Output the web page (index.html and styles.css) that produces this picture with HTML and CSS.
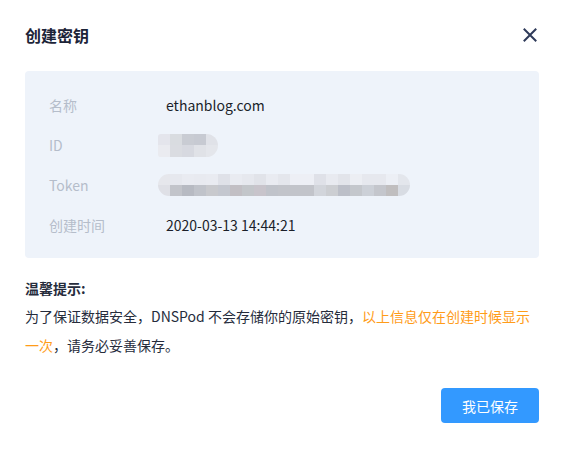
FILE: index.html
```html
<!DOCTYPE html>
<html lang="zh-CN">
<head>
<meta charset="utf-8">
<title>创建密钥</title>
<link rel="stylesheet" href="styles.css">
</head>
<body>
<div class="dialog">
  <div class="header">
    <div class="title">创建密钥</div>
    <svg class="close" width="18" height="18" viewBox="0 0 18 18" aria-label="关闭">
      <path d="M3.5 3.5 L14.5 14.5 M14.5 3.5 L3.5 14.5" stroke="#2e3a59" stroke-width="2" stroke-linecap="square" fill="none"/>
    </svg>
  </div>
  <div class="info">
    <div class="row"><div class="label">名称</div><div class="value">ethanblog.com</div></div>
    <div class="row"><div class="label">ID</div><div class="value"><div class="blur blur-id"><div class="brow id-top"></div><div class="brow id-bot"></div></div></div></div>
    <div class="row"><div class="label">Token</div><div class="value"><div class="blur blur-token"><div class="brow tk-top"></div><div class="brow tk-bot"></div></div></div></div>
    <div class="row"><div class="label">创建时间</div><div class="value">2020-03-13 14:44:21</div></div>
  </div>
  <div class="tips">
    <div class="tips-title">温馨提示:</div>
    <p class="tips-text">为了保证数据安全，DNSPod 不会存储你的原始密钥，<span class="warn">以上信息仅在创建时候显示</span><span class="warn">一次</span>，请务必妥善保存。</p>
  </div>
  <div class="footer">
    <button class="btn">我已保存</button>
  </div>
</div>
</body>
</html>
```
FILE: styles.css
```css
* { box-sizing: border-box; }
html, body { margin: 0; padding: 0; background: #fff; }
body {
  font-family: "Noto Sans CJK SC", "Noto Sans", sans-serif;
  font-size: 14px;
  color: #262c3c;
}
.dialog {
  width: 563px;
  padding: 24px 24px 0 25px;
}
.header {
  display: flex;
  justify-content: space-between;
  align-items: center;
  height: 22px;
}
.title {
  font-size: 16px;
  line-height: 22px;
  font-weight: 700;
  color: #1c2438;
}
.close { display: block; }
.info {
  margin-top: 25px;
  background: #eef3fa;
  border-radius: 4px;
  padding: 14px 24px 13px 24px;
}
.row {
  display: grid;
  grid-template-columns: 117px 1fr;
  align-items: center;
  height: 40px;
  line-height: 20px;
}
.label { color: #b5bdca; }
.value { color: #1b1f2a; display: flex; align-items: center; }
.blur {
  margin-left: -8px;
  display: flex;
  flex-direction: column;
  overflow: hidden;
}
.brow { flex: 1; }
.blur-id {
  width: 60px;
  height: 23px;
  border-radius: 3px 12px 12px 3px;
}
.id-top {
  background: linear-gradient(to right,
    #e4e5ec 0 12px, #d9dce0 12px 24px, #c9ccd3 24px 36px, #c7cad2 36px 48px, #e0e2e8 48px 60px);
}
.id-bot {
  background: linear-gradient(to right,
    #eaebf0 0 12px, #dadce1 12px 24px, #d7d9e0 24px 36px, #e0e2e7 36px 48px, #e4e6eb 48px 60px);
}
.blur-token {
  width: 252px;
  height: 22px;
  border-radius: 11px;
}
.tk-top {
  background: linear-gradient(to right,
    #e6e7ec 0 12px, #e6e8ee 12px 24px, #e9ebf1 24px 36px, #e8eaf0 36px 48px, #e9ebf1 48px 60px,
    #dfe1e8 60px 72px, #e9ebf1 72px 84px, #e6e8ee 84px 96px, #e1e3e9 96px 108px, #e9ebf1 108px 120px,
    #e4e6ec 120px 132px, #edeff5 132px 156px, #dfe1e8 156px 168px, #e8eaf0 168px 180px, #e2e4ea 180px 192px,
    #eceef3 192px 204px, #e6e8ee 204px 216px, #e6e8ee 216px 228px, #eceff5 228px 240px, #e3e6ec 240px 252px);
}
.tk-bot {
  background: linear-gradient(to right,
    #dfe0e6 0 12px, #c2c4ca 12px 24px, #b7bac2 24px 36px, #c0c3ca 36px 48px, #c8c9cd 48px 60px,
    #c4c7cf 60px 72px, #c2bfc4 72px 84px, #c3c6ca 84px 96px, #c8c4cb 96px 108px, #c0c3ca 108px 120px,
    #c2c4ca 120px 156px, #d2d5db 156px 168px, #ccced2 168px 180px, #bcbfc8 180px 192px, #c4c7cc 192px 204px,
    #ccd0d7 204px 216px, #c4c6cc 216px 228px, #c0bebf 228px 240px, #d8dce3 240px 252px);
}
.tips { margin-top: 16px; }
.tips-title {
  font-weight: 700;
  line-height: 28px;
  color: #262c3c;
}
.tips-text {
  margin: 0;
  line-height: 29px;
  color: #262c3c;
}
.warn { color: #ff9c19; }
.footer {
  display: flex;
  justify-content: flex-end;
  margin-top: 28px;
}
.btn {
  width: 98px;
  height: 35px;
  border: none;
  border-radius: 4px;
  background: #3399ff;
  color: #fff;
  font-family: inherit;
  font-size: 14px;
  padding: 0;
}
```
